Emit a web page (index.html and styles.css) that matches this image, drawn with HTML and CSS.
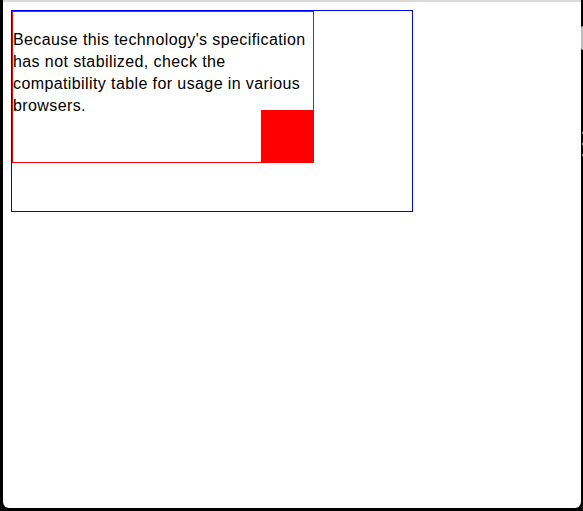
FILE: index.html
```html
<!DOCTYPE html>
<html>
<head>
<meta charset="utf-8">
<link rel="stylesheet" href="styles.css">
</head>
<body>
<div class="window">
  <div class="outer">
    <div class="inner">
      <p class="text">Because this technology's specification has not stabilized, check the compatibility table for usage in various browsers.</p>
      <div class="square"></div>
    </div>
  </div>
  <div class="edge-marks"><span class="mark tall"></span><span class="mark m1"></span><span class="mark m2"></span><span class="mark m3"></span></div>
</div>
</body>
</html>
```

FILE: styles.css
```css
html, body {
  margin: 0;
  padding: 0;
  background: #000;
  height: 100%;
}
.window {
  position: relative;
  box-sizing: border-box;
  margin: 0 2px 0 3px;
  height: 508px;
  background: #fff;
  border-top: 2px solid #d9d9d9;
  border-radius: 0 0 6px 6px;
  padding: 8px;
  font-family: "Liberation Sans", Arial, sans-serif;
  color: #000;
}
.outer {
  width: 400px;
  height: 200px;
  border: 1px solid #0000ff;
}
.inner {
  position: relative;
  width: 300px;
  height: 150px;
  border: 1px solid #ff0000;
}
.text {
  margin: 17px 0 0 0;
  font-size: 16px;
  line-height: 22px;
  letter-spacing: 0.4px;
}
.square {
  position: absolute;
  right: -1px;
  bottom: -1px;
  width: 53px;
  height: 53px;
  background: #ff0000;
}
.edge-marks {
  position: absolute;
  right: -2px;
  top: 0;
  width: 2px;
}
.mark {
  position: absolute;
  right: 0;
  width: 1px;
  height: 2px;
  background: #9a9a9a;
}
.mark.tall { top: 24px; height: 24px; width: 2px; background: #bdbdbd; border-radius: 2px 0 0 2px; }
.mark.m1 { top: 130px; }
.mark.m2 { top: 141px; }
.mark.m3 { top: 152px; }
```
